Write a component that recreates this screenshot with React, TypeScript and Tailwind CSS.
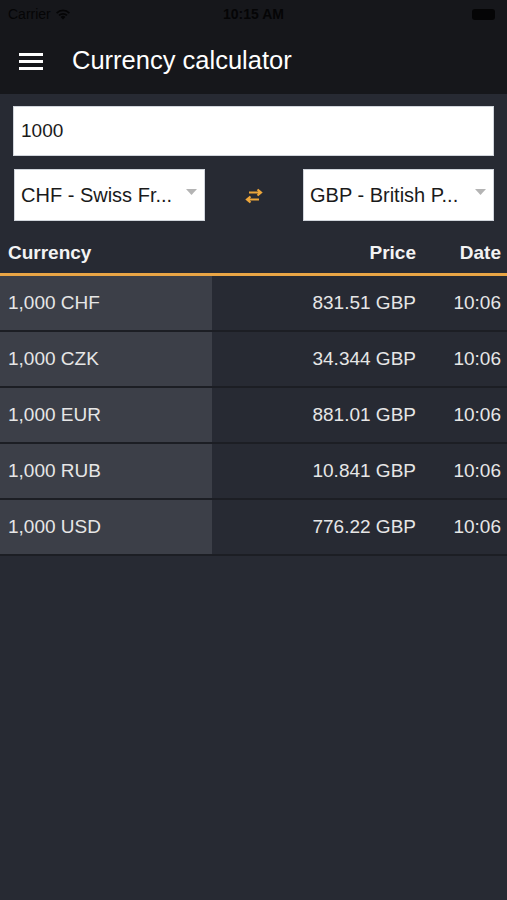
import React from 'react'

const rows = [
  { from: '1,000 CHF', price: '831.51 GBP', date: '10:06' },
  { from: '1,000 CZK', price: '34.344 GBP', date: '10:06' },
  { from: '1,000 EUR', price: '881.01 GBP', date: '10:06' },
  { from: '1,000 RUB', price: '10.841 GBP', date: '10:06' },
  { from: '1,000 USD', price: '776.22 GBP', date: '10:06' },
]

const font = { fontFamily: '"Liberation Sans", Arial, sans-serif' }

const Select = ({ label }: { label: string }) => (
  <div className="flex items-center justify-between w-[191px] h-[52px] bg-white border border-gray-300 pl-[6px] pr-[7px]">
    <span className="text-[20px] text-[#1a1a1a] truncate">{label}</span>
    <svg width="11" height="6" viewBox="0 0 11 6" className="shrink-0 -mt-[6px]">
      <path d="M0 0h11L5.5 6z" fill="#b4b4b4" />
    </svg>
  </div>
)

export default function App() {
  return (
    <div className="w-[507px] h-[900px] bg-[#272a33] text-white overflow-hidden" style={font}>
      {/* status bar */}
      <div className="h-[28px] bg-[#16171b] flex items-center justify-between px-[8px] text-[#050506] text-[14px]">
        <div className="flex items-center gap-1 w-[120px]">
          <span>Carrier</span>
          <svg width="16" height="12" viewBox="0 0 16 12">
            <path d="M8 11.5 5.6 9a3.4 3.4 0 0 1 4.8 0z" fill="#050506" />
            <path d="M3.4 6.8a6.5 6.5 0 0 1 9.2 0l-1.3 1.3a4.6 4.6 0 0 0-6.6 0z" fill="#050506" />
            <path d="M1 4.4a10 10 0 0 1 14 0l-1.3 1.3a8.1 8.1 0 0 0-11.4 0z" fill="#050506" />
          </svg>
        </div>
        <span className="font-bold">10:15 AM</span>
        <div className="w-[120px] flex justify-end pr-[4px]">
          <div className="w-[23px] h-[11px] rounded-[3px] bg-[#050506]" />
        </div>
      </div>

      {/* app bar */}
      <div className="h-[66px] bg-[#16171b] flex items-center">
        <div className="ml-[19px] w-[24px] flex flex-col gap-[4px]">
          <div className="h-[3px] bg-white" />
          <div className="h-[3px] bg-white" />
          <div className="h-[3px] bg-white" />
        </div>
        <span className="ml-[29px] -mt-[2px] text-[25.5px] text-white">Currency calculator</span>
      </div>

      {/* form */}
      <div className="pt-[12px] px-[13px]">
        <div className="h-[50px] bg-white border border-gray-300 flex items-center px-[7px] text-[19px] text-[#1a1a1a]">
          1000
        </div>
        <div className="mt-[13px] flex items-center justify-between pl-px">
          <Select label="CHF - Swiss Fr..." />
          <svg width="22" height="16" viewBox="0 0 22 16" className="mt-px">
            <path d="M6 4.5h12M14.5 1.5l3.5 3-3.5 3" stroke="#eda63b" strokeWidth="2.2" fill="none" />
            <path d="M16 11.5H4M7.5 8.5 4 11.5l3.5 3" stroke="#eda63b" strokeWidth="2.2" fill="none" />
          </svg>
          <Select label="GBP - British P..." />
        </div>
      </div>

      {/* table */}
      <div>
        <div className="grid grid-cols-[212px_1fr_91px] h-[52px] items-end pb-[6px] text-[19px] font-bold text-[#f3f3f3]">
          <span className="pl-[8px]">Currency</span>
          <span className="text-right">Price</span>
          <span className="text-right pr-[6px]">Date</span>
        </div>
        <div className="h-[3px] bg-[#e9a545]" />
        {rows.map((r) => (
          <div key={r.from} className="grid grid-cols-[212px_1fr_91px] h-[56px] border-b-2 border-[#1c1e24] text-[19px] text-[#e6e6e6]">
            <span className="bg-[#3c3f48] pl-[8px] flex items-center">{r.from}</span>
            <span className="flex items-center justify-end">{r.price}</span>
            <span className="flex items-center justify-end pr-[6px]">{r.date}</span>
          </div>
        ))}
      </div>
    </div>
  )
}
